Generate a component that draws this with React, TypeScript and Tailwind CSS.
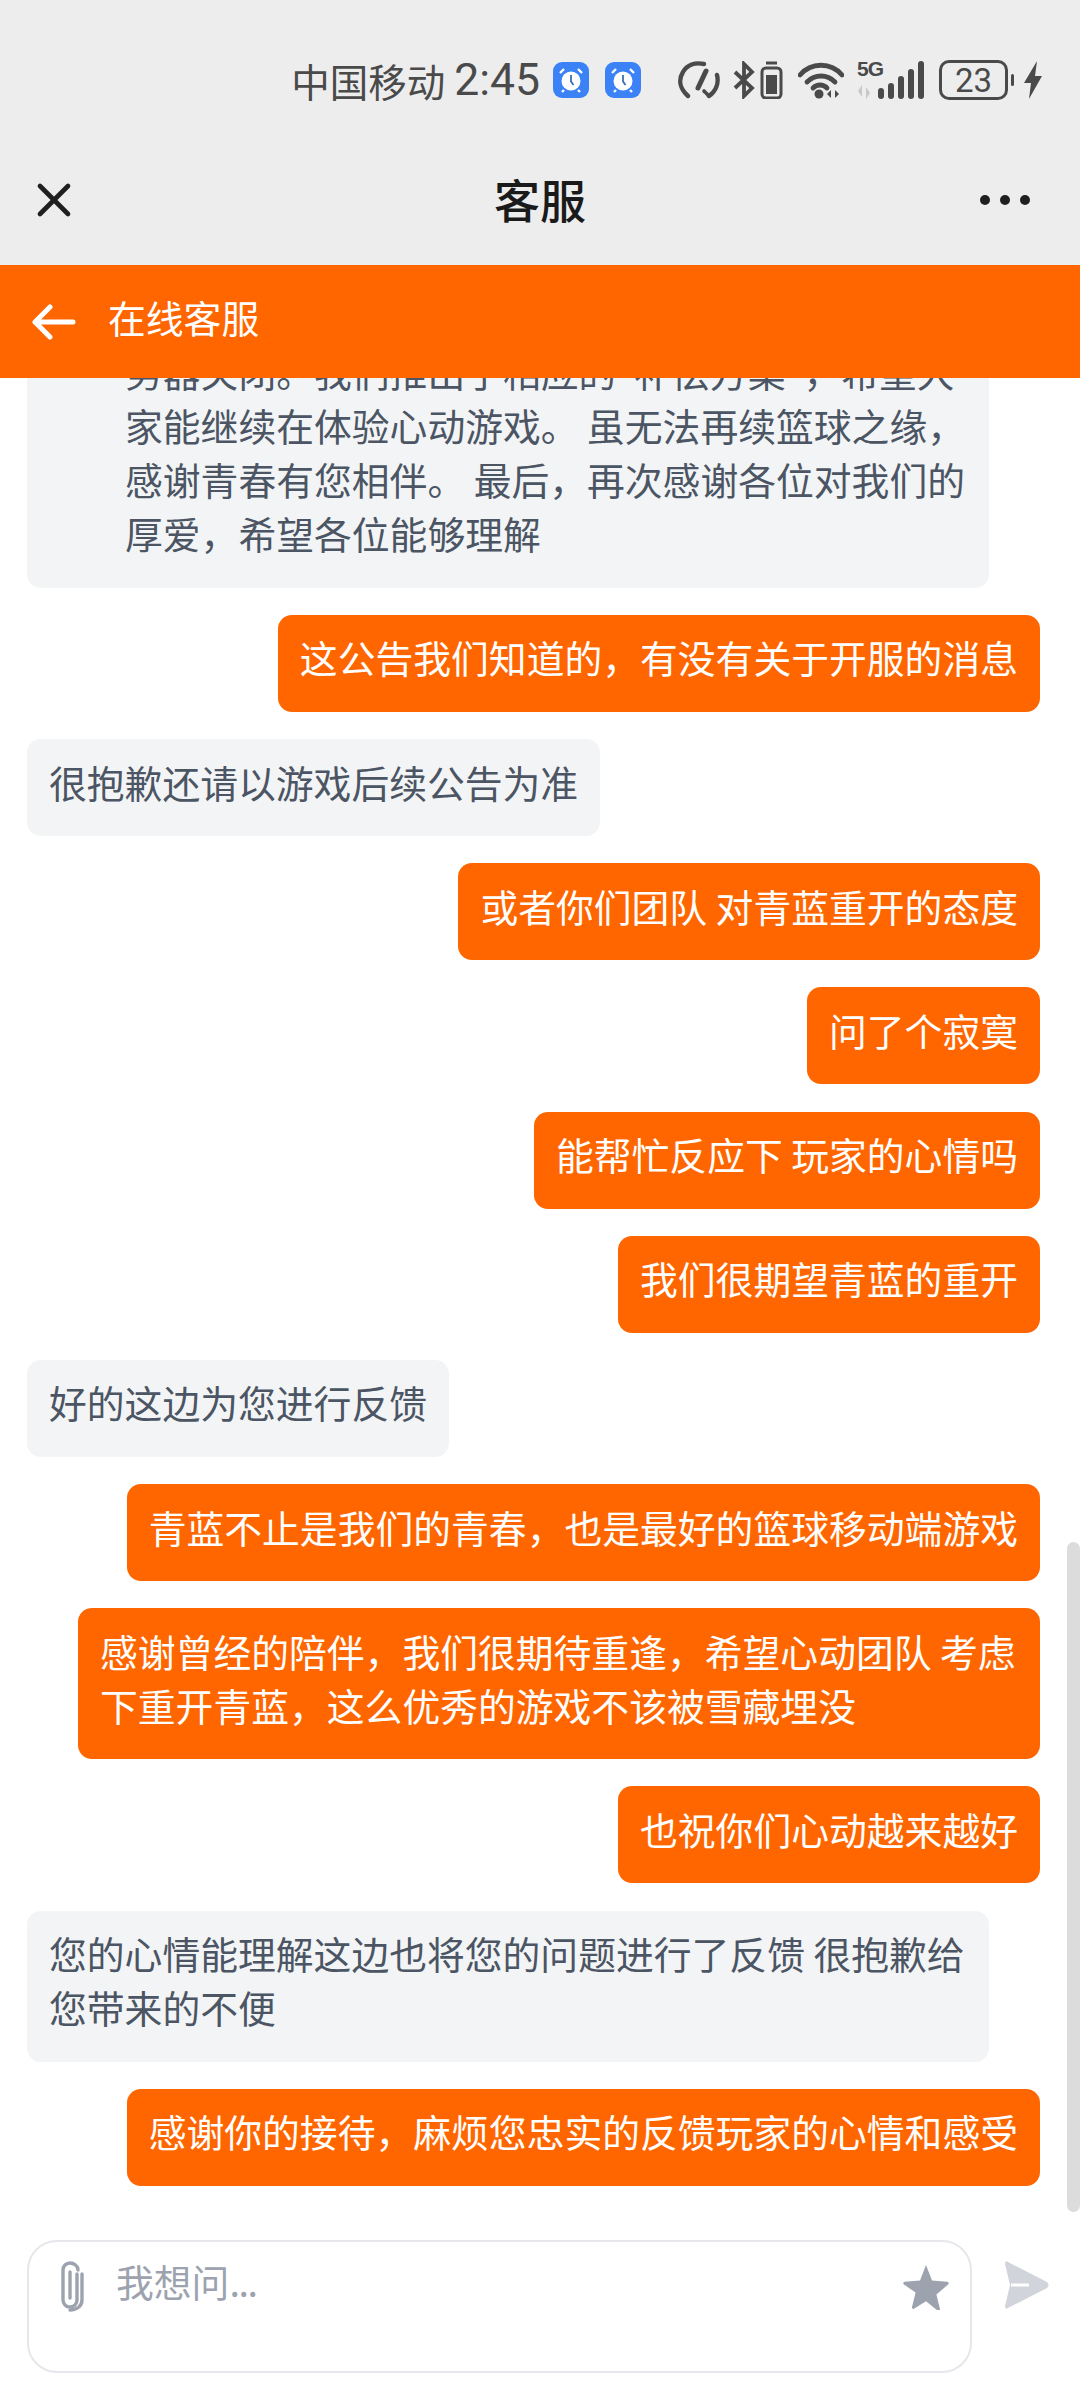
import { X } from "lucide-react";

const cjk = { fontFamily: '"Noto Sans CJK SC", "Noto Sans", sans-serif' };

type Msg = { me: boolean; lines: string[] };

const messages: Msg[] = [
  { me: true, lines: ["这公告我们知道的，有没有关于开服的消息"] },
  { me: false, lines: ["很抱歉还请以游戏后续公告为准"] },
  { me: true, lines: ["或者你们团队 对青蓝重开的态度"] },
  { me: true, lines: ["问了个寂寞"] },
  { me: true, lines: ["能帮忙反应下 玩家的心情吗"] },
  { me: true, lines: ["我们很期望青蓝的重开"] },
  { me: false, lines: ["好的这边为您进行反馈"] },
  { me: true, lines: ["青蓝不止是我们的青春，也是最好的篮球移动端游戏"] },
  { me: true, lines: ["感谢曾经的陪伴，我们很期待重逢，希望心动团队 考虑", "下重开青蓝，这么优秀的游戏不该被雪藏埋没"] },
  { me: true, lines: ["也祝你们心动越来越好"] },
  { me: false, lines: ["您的心情能理解这边也将您的问题进行了反馈 很抱歉给", "您带来的不便"] },
  { me: true, lines: ["感谢你的接待，麻烦您忠实的反馈玩家的心情和感受"] },
];

function Alarm() {
  return (
    <svg width="36" height="36" viewBox="0 0 36 36">
      <rect width="36" height="36" rx="9" fill="#3b82f6" />
      <circle cx="18" cy="19" r="9.5" fill="#fff" />
      <path d="M18 13v6.500l2.500 3.500" fill="none" stroke="#3b6fb0" strokeWidth="1.800" />
      <path d="M7 11l4-4M29 11l-4-4M11 28l-2 2M25 28l2 2" stroke="#fff" strokeWidth="2.400" />
    </svg>
  );
}

function StatusIcons() {
  return (
    <div className="flex items-center text-[#4a4a4a]">
      {/* speedometer */}
      <svg width="42" height="38" viewBox="0 0 42 38" fill="none" stroke="currentColor" strokeWidth="4.400" strokeLinecap="round" className="ml-[37px]">
        <path d="M10 35C2 28 0 19 5 11 9 4 17 1 26 3" />
        <path d="M31 35c7-5 10-13 8-21" />
        <path d="M20 27l8-17" strokeWidth="5" />
        <path d="M31 35l-5-5" strokeWidth="3.600" />
      </svg>
      {/* bluetooth + small battery */}
      <svg width="50" height="38" viewBox="0 0 50 38" fill="none" stroke="currentColor" strokeWidth="3.800" className="ml-[13px]">
        <path d="M2 11l17 16-8 8V3l8 8L2 27" />
        <rect x="29" y="7" width="19" height="30" rx="4" strokeWidth="3" />
        <rect x="33" y="14" width="11" height="19" fill="currentColor" stroke="none" />
        <path d="M33 2h11" strokeWidth="3" />
      </svg>
      {/* wifi */}
      <svg width="46" height="38" viewBox="0 0 46 38" fill="none" stroke="currentColor" strokeWidth="4.800" strokeLinecap="round" className="ml-[15px]">
        <path d="M2 14C13 1 33 1 44 14" />
        <path d="M9 21c8-8 20-8 28 0" />
        <path d="M15 27c4-4 10-4 14 0" />
        <circle cx="21" cy="33" r="4.500" fill="currentColor" stroke="none" />
        <path d="M33 29l-4 4 4 4zM37 29l4 4-4 4z" fill="currentColor" stroke="none" />
      </svg>
      {/* 5G + bars */}
      <div className="relative ml-[13px] h-[38px] w-[68px]">
        <svg width="68" height="38" viewBox="0 0 68 38" className="absolute left-0 top-0">
          <path d="M5 24v12l-4-6zM9 38V26l4 6z" fill="#c8c8c8" />
          <rect x="21" y="27" width="6" height="11" rx="3" fill="currentColor" />
          <rect x="31" y="22" width="6" height="16" rx="3" fill="currentColor" />
          <rect x="41" y="15" width="6" height="23" rx="3" fill="currentColor" />
          <rect x="51" y="8" width="6" height="30" rx="3" fill="currentColor" />
          <rect x="61" y="0" width="6" height="38" rx="3" fill="currentColor" />
        </svg>
        <span className="absolute left-0 top-[-4px] text-[21px] leading-[24px] font-bold tracking-[-1px]" style={{ fontFamily: '"Liberation Sans", sans-serif' }}>
          5G
        </span>
      </div>
      {/* battery */}
      <div className="ml-[14px] flex h-[40px] w-[69px] items-center justify-center rounded-[10px] border-[3px] border-[#4a4a4a] text-[33px] leading-none" style={{ fontFamily: '"Roboto", sans-serif' }}>
        23
      </div>
      <div className="ml-[3px] h-[12px] w-[3px] rounded-full bg-[#4a4a4a]" />
      <svg width="18" height="38" viewBox="0 0 18 38" className="ml-[10px]">
        <path d="M13 0L0 22h7L5 38l13-23h-7z" fill="currentColor" />
      </svg>
    </div>
  );
}

function Bubble({ msg }: { msg: Msg }) {
  return (
    <div
      className={`shrink-0 rounded-[14px] px-[22px] pt-[15.450px] pb-[27.450px] text-[37.800px] leading-[54px] whitespace-nowrap ${
        msg.me ? "self-end bg-[#ff6600] text-white" : "self-start bg-[#f3f4f6] text-[#4b5563]"
      } ${msg.lines.length > 1 ? "w-[962px]" : ""}`}
    >
      {msg.lines.map((line) => (
        <div key={line}>{line}</div>
      ))}
    </div>
  );
}

export default function App() {
  return (
    <div className="relative flex h-[2400px] w-[1080px] flex-col overflow-hidden bg-white" style={cjk}>
      <header className="h-[265px] shrink-0 bg-[#ededed]">
        <div className="flex h-[160px] items-center justify-end pr-[38px] text-[#4a4a4a]">
          <span className="text-[38.500px] leading-none">中国移动</span>
          <span className="ml-[9px] text-[44.500px] leading-none" style={{ fontFamily: '"Roboto", sans-serif' }}>2:45</span>
          <span className="ml-[13px]"><Alarm /></span>
          <span className="ml-[16px]"><Alarm /></span>
          <StatusIcons />
        </div>
        <div className="grid h-[80px] grid-cols-3 items-center pl-[26px] pr-[50px]">
          <X size={56} strokeWidth={2} className="text-[#1f1f1f]" />
          <h1 className="pb-[4px] pl-[24px] text-center text-[46px] leading-none font-medium text-[#1a1a1a]">客服</h1>
          <div className="flex justify-end gap-[10px]">
            <span className="size-[10px] rounded-full bg-[#1f1f1f]" />
            <span className="size-[10px] rounded-full bg-[#1f1f1f]" />
            <span className="size-[10px] rounded-full bg-[#1f1f1f]" />
          </div>
        </div>
      </header>

      <div className="z-10 flex h-[113px] shrink-0 items-center bg-[#ff6600] pl-[32px] text-white">
        <svg width="44" height="36" viewBox="0 0 44 36" fill="none" stroke="currentColor" strokeWidth="5" strokeLinecap="round" strokeLinejoin="round">
          <path d="M18 3L3 18l15 15M3 18h38" />
        </svg>
        <span className="ml-[32px] pb-[9px] text-[37.800px] leading-none">在线客服</span>
      </div>

      <main className="flex min-h-0 flex-1 flex-col justify-end gap-[27.300px] overflow-hidden pl-[27px] pr-[40px] pb-[26.300px]">
        <div className="w-[962px] shrink-0 self-start rounded-[14px] bg-[#f3f4f6] pt-[15.450px] pr-[22px] pb-[27.450px] pl-[98px] text-[37.800px] leading-[54px] whitespace-nowrap text-[#4b5563]">
          <div>务器关闭。我们推出了相应的"补偿方案"，希望大</div>
          <div>家能继续在体验心动游戏。 虽无法再续篮球之缘，</div>
          <div>感谢青春有您相伴。 最后，再次感谢各位对我们的</div>
          <div>厚爱，希望各位能够理解</div>
        </div>
        {messages.map((msg) => (
          <Bubble key={msg.lines[0]} msg={msg} />
        ))}
      </main>

      <footer className="flex shrink-0 items-start pt-[28px] pb-[27px] pl-[27px]">
        <div className="flex h-[133px] w-[945px] items-start rounded-[30px] border-2 border-[#e5e7eb] pl-[26px] pr-[20px] pt-[18px]">
          <svg width="30" height="52" viewBox="0 0 30 52" fill="none" stroke="#9ca3af" strokeWidth="3.400" strokeLinecap="round">
            <path d="M22 14v26c0 4-3 7-7 7s-7-3-7-7V10c0-4 3-7 7-7s8 3 8 7" />
            <path d="M15 12v26" />
            <path d="M27 14v26c0 6-5 10-12 10" />
          </svg>
          <span className="ml-[31px] -mt-[4px] text-[37.800px] leading-[50px] text-[#9ca3af]">
            我想问<span className="tracking-[-1.500px]">...</span>
          </span>
          <svg width="48" height="46" viewBox="0 0 24 23" className="ml-auto mt-[4px]">
            <path d="M12 0.500l3 7.800 7.600.6c.8.1 1 .9.4 1.400l-5.800 4.900 1.800 7.300c.2.7-.6 1.200-1.200.8L12 18.600l-5.800 3.700c-.6.4-1.400-.1-1.200-.8l1.800-7.300L1 10.300c-.6-.5-.4-1.300.4-1.400L9 8.300z" fill="#9ca3af" />
          </svg>
        </div>
        <svg width="46" height="50" viewBox="0 0 46 50" className="ml-[32px] mt-[20px]">
          <path d="M1 4Q1 0 4 2L43 22Q46 25 43 28L4 48Q1 50 1 46L6 25z" fill="#d1d5db" />
          <path d="M7 25h18" stroke="#fff" strokeWidth="3" />
        </svg>
      </footer>

      <div className="absolute top-[1542px] right-0 h-[670px] w-[13px] rounded-full bg-[#dcdcdc]" />
    </div>
  );
}
